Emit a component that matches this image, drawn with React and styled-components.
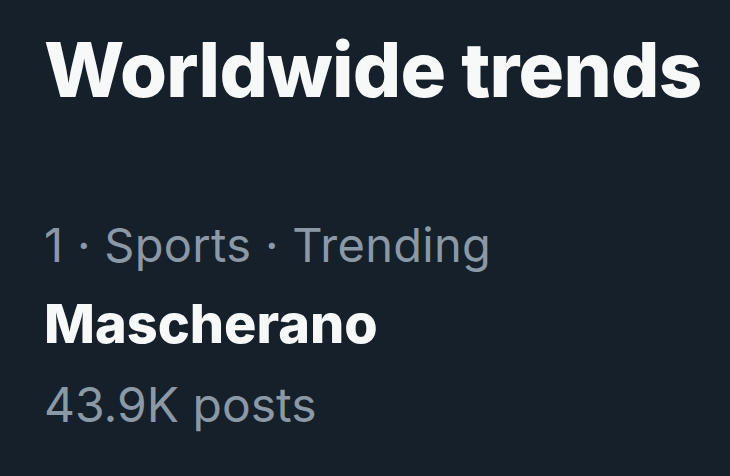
import React from "react";
import styled, { createGlobalStyle } from "styled-components";

const Global = createGlobalStyle`
  html, body { margin: 0; padding: 0; background: #15202b; }
  body { font-family: Inter, "Liberation Sans", Arial, sans-serif; }
`;

const Panel = styled.div`
  width: 730px;
  height: 476px;
  background: #15202b;
  box-sizing: border-box;
  padding: 29px 0 0 44px;
  display: flex;
  flex-direction: column;
  overflow: hidden;
`;

const Title = styled.h2`
  margin: 0;
  color: #f7f9f9;
  font-size: 76px;
  font-weight: 800;
  line-height: 80px;
  letter-spacing: -0.75px;
`;

const Trend = styled.div`
  margin-top: 96px;
  display: flex;
  flex-direction: column;
`;

const Meta = styled.div`
  color: ${(p) => p.$color || "#8b98a5"};
  font-size: ${(p) => p.$size || 47}px;
  font-weight: ${(p) => p.$weight || 400};
  line-height: ${(p) => p.$lh || 80}px;
  letter-spacing: ${(p) => p.$ls || 0}px;
`;

export default function App() {
  return (
    <>
      <Global />
      <Panel>
        <Title>Worldwide trends</Title>
        <Trend>
          <Meta $ls={0.3}>1 · Sports · Trending</Meta>
          <Meta $color="#f7f9f9" $weight={800} $size={54} $lh={78}>Mascherano</Meta>
          <Meta $size={48} $lh={83}>43.9K posts</Meta>
        </Trend>
      </Panel>
    </>
  );
}
